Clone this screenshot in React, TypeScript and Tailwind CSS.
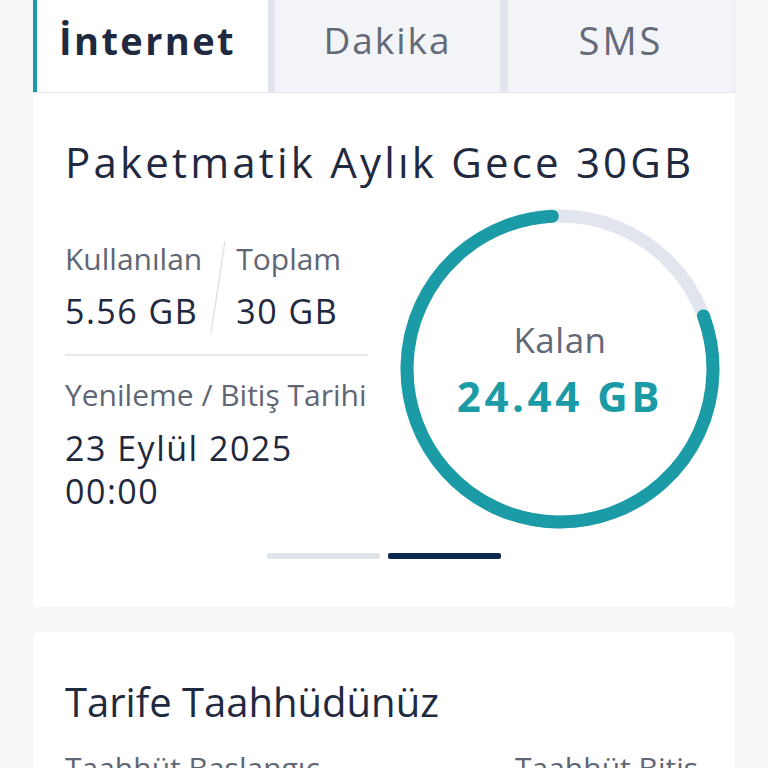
import React from "react";

const used = 5.56;
const total = 30;

const Ring = () => {
  const r = 153;
  const c = 2 * Math.PI * r;
  const usedLen = (used / total) * c;
  return (
    <div className="relative h-[322px] w-[322px] shrink-0">
      <svg width="322" height="322" viewBox="0 0 322 322" className="absolute inset-0">
        <circle cx="161" cy="161" r={r} fill="none" stroke="#e2e5ee" strokeWidth="13" />
        <circle
          cx="161"
          cy="161"
          r={r}
          fill="none"
          stroke="#1a9ba6"
          strokeWidth="13"
          strokeLinecap="round"
          strokeDasharray={`${c - usedLen - 16} ${c}`}
          transform={`rotate(${-90 + (used / total) * 360 + 3} 161 161)`}
        />
      </svg>
      <div className="absolute inset-0 flex flex-col items-center pt-[110px]">
        <span className="text-[35px] leading-[44px] tracking-[0.5px] text-[#626978]">Kalan</span>
        <span className="mt-[8px] text-[42px] font-bold leading-[52px] tracking-[3.6px] text-[#1a9ba6]">
          24.44 GB
        </span>
      </div>
    </div>
  );
};

const Label = ({ children, className = "" }: { children: React.ReactNode; className?: string }) => (
  <div className={`whitespace-nowrap text-[30px] leading-[40px] text-[#5f6674] ${className}`}>{children}</div>
);

const Value = ({ children, className = "" }: { children: React.ReactNode; className?: string }) => (
  <div className={`whitespace-nowrap text-[34px] leading-[48px] tracking-[1.5px] ${className}`}>{children}</div>
);

export default function App() {
  return (
    <div
      className="h-[768px] w-[768px] overflow-hidden bg-[#f5f6f8] text-[#1f2940]"
      style={{ fontFamily: '"Open Sans", sans-serif' }}
    >
      <div className="mx-[33px]">
        {/* tabs */}
        <div className="flex h-[93px] border-b border-[#e4e7ee]">
          <div className="flex w-[235px] items-center justify-center border-l-[4px] border-[#1a9ba6] bg-white pb-[12px] pr-[10px] text-[38px] font-bold tracking-[2.4px] text-[#1f2940]">
            İnternet
          </div>
          <div className="w-[7px] bg-[#e2e5ec]" />
          <div className="flex w-[225px] items-center justify-center bg-[#f3f4f7] pb-[12px] text-[37px] tracking-[2px] text-[#646a77]">
            Dakika
          </div>
          <div className="w-[8px] bg-[#e2e5ec]" />
          <div className="flex flex-1 items-center justify-center border-r border-[#e4e7ee] bg-[#f3f4f7] pb-[12px] text-[38px] tracking-[3px] text-[#646a77]">
            SMS
          </div>
        </div>

        {/* package card */}
        <div className="h-[514px] bg-white pl-[32px] pr-[14px] pt-[43px]">
          <h1 className="whitespace-nowrap text-[42px] leading-[52px] font-normal tracking-[3.2px]">
            Paketmatik Aylık Gece 30GB
          </h1>
          <div className="mt-[20px] flex justify-between">
            <div className="w-[303px] pt-[31px]">
              <div className="flex">
                <div>
                  <Label>Kullanılan</Label>
                  <Value className="mt-[8px]">5.56 GB</Value>
                </div>
                <div className="ml-[8px] mr-[10px] w-[16px]">
                  <svg width="16" height="96" viewBox="0 0 16 96">
                    <line x1="15" y1="2" x2="1" y2="94" stroke="#dfe2e8" strokeWidth="1.5" />
                  </svg>
                </div>
                <div>
                  <Label>Toplam</Label>
                  <Value className="mt-[8px]">30 GB</Value>
                </div>
              </div>
              <div className="mt-[19px] h-[2px] bg-[#e6e8ed]" />
              <Label className="mt-[19px]">Yenileme / Bitiş Tarihi</Label>
              <div className="mt-[12px] whitespace-nowrap text-[34px] leading-[43px] tracking-[1.5px]">
                23 Eylül 2025
                <br />
                00:00
              </div>
            </div>
            <Ring />
          </div>
          <div className="mt-[23px] flex justify-center gap-[8px] pr-[18px]">
            <div className="h-[6px] w-[113px] rounded-[2px] bg-[#dfe3ea]" />
            <div className="h-[6px] w-[113px] rounded-[2px] bg-[#0d2a4e]" />
          </div>
        </div>

        {/* commitment card */}
        <div className="mt-[25px] h-[200px] rounded-t-[6px] bg-white px-[32px] pt-[44px]">
          <h2 className="text-[40px] leading-[52px] font-normal">Tarife Taahhüdünüz</h2>
          <div className="mt-[20px] grid grid-cols-[450px_1fr] text-[30px] leading-[40px] text-[#5f6674]">
            <span>Taahhüt Başlangıç</span>
            <span>Taahhüt Bitiş</span>
          </div>
        </div>
      </div>
    </div>
  );
}
